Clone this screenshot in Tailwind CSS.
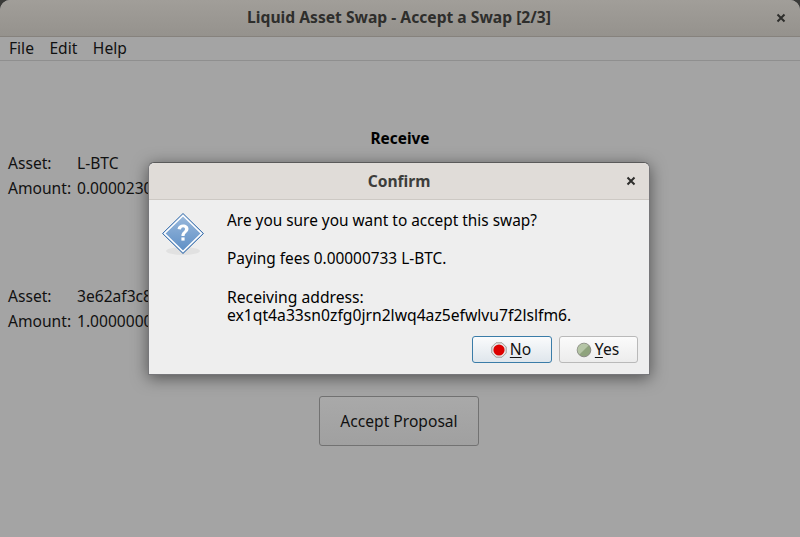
<!DOCTYPE html>
<html lang="en">
  <head>
    <meta charset="UTF-8" />
    <title>Liquid Asset Swap - Accept a Swap [2/3]</title>
    <script src="https://cdn.jsdelivr.net/npm/@tailwindcss/browser@4"></script>
  </head>
  <body class="bg-[#3a3a38] overflow-hidden">
    <div class="relative w-[800px] h-[537px] rounded-t-[10px] overflow-hidden bg-[#a4a4a4] flex flex-col font-['Noto_Sans',sans-serif] text-[15.6px] text-[#111]">
      <!-- main window title -->
      <div class="h-[37px] shrink-0 flex items-center justify-center relative bg-gradient-to-b from-[#a19e99] to-[#95928d] border-b border-[#86827d]">
        <span class="font-bold text-[15.65px] pr-[2px] text-[#2e2e2c]">Liquid Asset Swap - Accept a Swap [2/3]</span>
        <svg class="absolute left-[776px] top-[13px]" width="10" height="10" viewBox="0 0 10 10"><path d="M1.5 1.5 8.5 8.500M8.500 1.5 1.5 8.500" stroke="#2e2e2c" stroke-width="2"/></svg>
      </div>
      <!-- menu -->
      <div class="h-[24px] shrink-0 flex items-center gap-[15.5px] pl-[9px] border-b border-[#8f8f8f]">
        <span>File</span><span>Edit</span><span>Help</span>
      </div>
      <!-- page body -->
      <div class="flex-1 flex flex-col pl-[8px]">
        <div class="mt-[68px] h-[20px] leading-[20px] text-center font-bold text-[15.4px] pr-[8px] text-black">Receive</div>
        <div class="mt-[2px] grid grid-cols-[69px_1fr] auto-rows-[25px] leading-[25px]">
          <span>Asset:</span><span>L-BTC</span>
          <span>Amount:</span><span>0.00002300</span>
        </div>
        <div class="mt-[83px] grid grid-cols-[69px_1fr] auto-rows-[25px] leading-[25px]">
          <span>Asset:</span><span>3e62af3c8a91d07b</span>
          <span>Amount:</span><span>1.00000000</span>
        </div>
        <div class="mt-[62px] flex justify-center pr-[10px]">
          <button class="w-[160px] h-[50px] pt-[1px] rounded-[3px] border border-[#727272] bg-gradient-to-b from-[#a9a9a9] to-[#a0a0a0]">Accept Proposal</button>
        </div>
      </div>
      <!-- confirm dialog -->
      <div class="absolute left-[148px] top-[162px] w-[502px] h-[213px] rounded-t-[6px] bg-[#eeeeee] border border-[#77777a] border-t-[#5a5a5a] shadow-[0_3px_16px_rgba(0,0,0,0.5)] flex flex-col">
        <div class="h-[37px] pt-[2px] shrink-0 rounded-t-[6px] flex items-center justify-center relative bg-[#e0dcd8] border-b border-[#cdc9c4]">
          <span class="font-bold text-[#3d3d3b]">Confirm</span>
          <svg class="absolute left-[477px] top-[13px]" width="10" height="10" viewBox="0 0 10 10"><path d="M1.5 1.5 8.500 8.500M8.500 1.5 1.5 8.500" stroke="#2e2e2c" stroke-width="2"/></svg>
        </div>
        <div class="flex-1 flex pl-[12px] pt-[12px]">
          <svg class="shrink-0" width="44" height="44" viewBox="0 0 44 44">
            <defs>
              <linearGradient id="q" x1="0" y1="0" x2="0" y2="1">
                <stop offset="0" stop-color="#9dbbdd"/><stop offset="1" stop-color="#5a8cc4"/>
              </linearGradient>
            </defs>
            <ellipse cx="22" cy="39" rx="17" ry="4" fill="#000" opacity="0.05"/>
            <path d="M22 1.500 42.500 21.500 22 41.500 1.500 21.500Z" fill="url(#q)" stroke="#3f72ad" stroke-width="1" stroke-linejoin="round"/>
            <path d="M22 3.500 40.500 21.500 22 39.500 3.500 21.500Z" fill="none" stroke="#fff" stroke-width="1.600"/>
            <path d="M16.500 17c.4-3 2.600-4.600 5.600-4.600 3.200 0 5.400 1.800 5.400 4.400 0 3.600-3.900 3.800-3.900 7.200h-3.200c0-4.300 3.600-4.500 3.600-7 0-1.100-.7-1.800-1.900-1.800-1.100 0-1.900.8-2.100 2.200Z" fill="#fff"/>
            <rect x="20.400" y="25.400" width="3.200" height="3.200" fill="#fff"/>
          </svg>
          <div class="ml-[22px] flex flex-col leading-[18px] text-black">
            <p class="text-[15.4px]">Are you sure you want to accept this swap?</p>
            <p class="mt-[20px] text-[15.4px]">Paying fees 0.00000733 L-BTC.</p>
            <p class="mt-[20px] text-[15.7px]">Receiving address:<br />ex1qt4a33sn0zfg0jrn2lwq4az5efwlvu7f2lslfm6.</p>
          </div>
        </div>
        <div class="flex justify-end gap-[7px] pr-[11px] pb-[11px]">
          <button class="w-[80px] h-[27px] pr-[2px] rounded-[3px] border border-[#3a7ca8] bg-gradient-to-b from-[#fafbfc] to-[#dfe6ec] flex items-center justify-center gap-[3px]">
            <svg width="16" height="16" viewBox="0 0 16 16"><path d="M5 .8h6L15.200 5v6L11 15.200H5L.8 11V5Z" fill="#e8e8e8" stroke="#a09c98"/><circle cx="8" cy="8" r="5.600" fill="#dd0000"/></svg>
            <span><span class="underline underline-offset-2">N</span>o</span>
          </button>
          <button class="w-[79px] h-[27px] pr-[2px] rounded-[3px] border border-[#b9b9b9] bg-gradient-to-b from-[#fbfbfb] to-[#ececec] flex items-center justify-center gap-[3px]">
            <svg width="16" height="16" viewBox="0 0 16 16"><circle cx="8" cy="8" r="6.800" fill="#8fa37d" stroke="#8a8a84"/><path d="M3.400 12.600A6.500 6.500 0 0 1 12.600 3.400Z" fill="#b5c5a6"/></svg>
            <span><span class="underline underline-offset-2">Y</span>es</span>
          </button>
        </div>
      </div>
    </div>
  </body>
</html>
